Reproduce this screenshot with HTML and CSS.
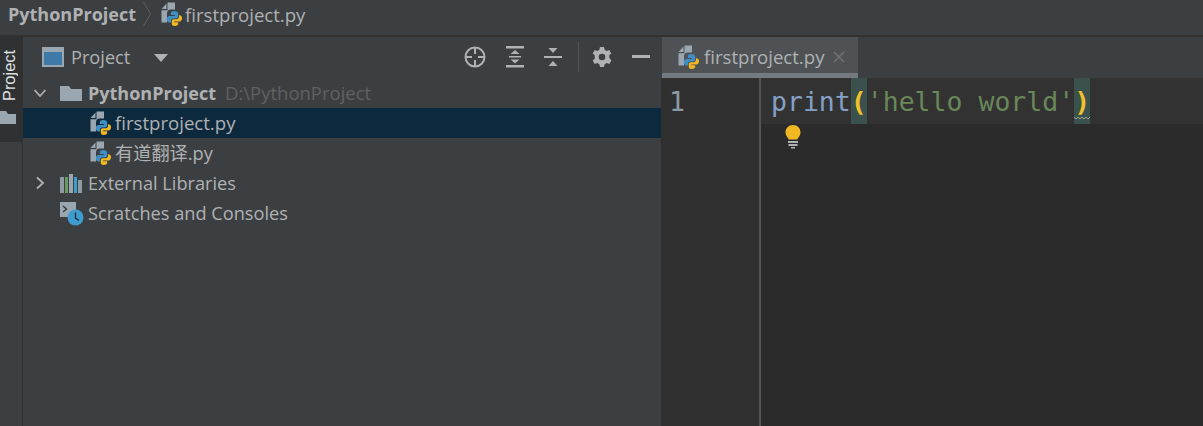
FILE: index.html
```html
<!DOCTYPE html>
<html lang="en">
<head>
<meta charset="utf-8">
<title>PythonProject</title>
<link rel="stylesheet" href="styles.css">
</head>
<body>
<svg class="defs" width="0" height="0" aria-hidden="true">
  <symbol id="py" viewBox="0 0 21 24" preserveAspectRatio="none">
    <path d="M0.500 7 L5.500 1.500 V7 Z" fill="#9aa7b0"/>
    <path d="M6.500 0.500 H14 V7.500 H9.500 C7.500 7.500 6 9 6 11.500 V20.500 H0.500 V8.200 H6.500 Z" fill="#9aa7b0"/>
    <path d="M13.500 9 C10.500 9 9.800 10 9.800 11.500 V13 H13.800 V14 H8.500 C6.800 14 5.800 15.500 5.800 17.300 C5.800 19.200 6.800 20.500 8.500 20.500 H10 V18.800 C10 17.300 11 16.500 12.300 16.500 H15.200 C16.500 16.500 17.200 15.500 17.200 14.500 V11.500 C17.200 10 15.500 9 13.500 9 Z" fill="#3f8fc4"/>
    <path d="M13.500 24 C16.500 24 17.200 23 17.200 21.800 V20.300 H13.200 V19.500 H18.500 C20 19.500 21 18 21 16.200 C21 14.400 20 13.200 18.500 13.200 H18 V14.800 C18 16.300 17 17.300 15.800 17.300 H12.800 C11.500 17.300 10.800 18.200 10.800 19.300 V21.800 C10.800 23.200 12 24 13.500 24 Z" fill="#f2b824"/>
  </symbol>
  <symbol id="folder" viewBox="0 0 22 16">
    <path d="M0 1 H9 L11 4 H22 V16 H0 Z" fill="#9aa7b0"/>
  </symbol>
</svg>

<header class="crumbs">
  <span class="crumb-root">PythonProject</span>
  <svg class="crumb-sep" width="10" height="26" viewBox="0 0 10 26"><path d="M1.500 1 L8.500 13 L1.500 25" fill="none" stroke="#5e6163" stroke-width="1"/></svg>
  <svg class="icon-py" width="21" height="24"><use href="#py"/></svg>
  <span class="crumb-file file-name">firstproject.py</span>
</header>

<main class="workspace">
  <aside class="stripe">
    <div class="stripe-tab">
      <span class="stripe-label">Project</span>
      <svg class="stripe-folder" width="18" height="13" viewBox="0 0 18 13"><path d="M-2 0 H6 L8 3 H16 V13 H-2 Z" fill="#9aa7b0"/></svg>
    </div>
  </aside>

  <section class="panel">
    <div class="panel-head">
      <div class="panel-title">
        <svg width="22" height="20" viewBox="0 0 22 20"><rect x="0" y="0" width="22" height="20" fill="#9aa7b0"/><rect x="2" y="5" width="18" height="13" fill="#3d7aa8"/></svg>
        <span class="panel-name">Project</span>
        <svg class="caret" width="14" height="8" viewBox="0 0 14 8"><path d="M0 0 H14 L7 8 Z" fill="#afb1b3"/></svg>
      </div>
      <div class="tools">
        <svg width="22" height="22" viewBox="0 0 22 22" fill="none" stroke="#afb1b3" stroke-width="2"><circle cx="11" cy="11" r="9.500"/><path d="M11 1.500 V8 M11 14 V20.500 M1.500 11 H8 M14 11 H20.500"/></svg>
        <svg width="18" height="22" viewBox="0 0 18 22" fill="#afb1b3"><rect y="0" width="18" height="2.500"/><rect y="19" width="18" height="2.500"/><rect x="3" y="10" width="12" height="1.500"/><path d="M9 4 L13.500 8 H4.500 Z M9 17.500 L13.500 13.500 H4.500 Z"/></svg>
        <svg width="18" height="20" viewBox="0 0 18 20" fill="#afb1b3"><rect y="9" width="18" height="2"/><path d="M4.500 1 H13.500 L9 6 Z M9 14 L13.500 19 H4.500 Z"/></svg>
        <span class="tool-sep"></span>
        <svg width="20" height="20" viewBox="0 0 20 20"><path fill="#afb1b3" fill-rule="evenodd" d="M8 0 H12 L12.600 2.700 L14.700 3.900 L17.300 3 L19.300 6.500 L17.300 8.300 V10.700 L19.300 13.500 L17.300 17 L14.700 16.100 L12.600 17.300 L12 20 H8 L7.400 17.300 L5.300 16.100 L2.700 17 L.700 13.500 L2.700 11.700 V8.300 L.700 6.500 L2.700 3 L5.300 3.900 L7.400 2.700 Z M10 6.700 A3.300 3.300 0 1 0 10 13.300 A3.300 3.300 0 1 0 10 6.700 Z"/></svg>
        <span class="minimize"></span>
      </div>
    </div>

    <ul class="tree">
      <li class="row">
        <svg class="chev" width="14" height="14" viewBox="0 0 14 14"><path d="M1.500 4 L7 10 L12.500 4" fill="none" stroke="#afb1b3" stroke-width="1.800"/></svg>
        <svg class="node-icon" width="22" height="16"><use href="#folder"/></svg>
        <span class="bold">PythonProject</span><span class="path">D:\PythonProject</span>
      </li>
      <li class="row row-file row-selected">
        <svg width="21" height="24"><use href="#py"/></svg>
        <span class="file-name">firstproject.py</span>
      </li>
      <li class="row row-file">
        <svg width="21" height="24"><use href="#py"/></svg>
        <span>有道翻译.py</span>
      </li>
      <li class="row">
        <svg class="chev" width="14" height="14" viewBox="0 0 14 14"><path d="M4 1.500 L10 7 L4 12.500" fill="none" stroke="#afb1b3" stroke-width="1.800"/></svg>
        <svg class="node-icon" width="22" height="19" viewBox="0 0 22 19"><rect x="0" y="3" width="4" height="16" fill="#8f9ba3"/><rect x="5" y="3" width="3" height="16" fill="#6b9a5e"/><rect x="9" y="0" width="4" height="19" fill="#9aa7b0"/><rect x="14" y="3" width="3" height="16" fill="#3f9ccf"/><rect x="18" y="6" width="4" height="13" fill="#8f9ba3"/></svg>
        <span>External Libraries</span>
      </li>
      <li class="row">
        <span class="chev-space"></span>
        <svg class="node-icon" width="24" height="25" viewBox="0 0 24 25"><rect x="0" y="1" width="16" height="15" fill="#9aa7b0"/><path d="M3 5 L6.500 8 L3 11" fill="none" stroke="#3c3f41" stroke-width="1.500"/><circle cx="15.500" cy="16.500" r="8" fill="#3f9ccf"/><path d="M15.500 11.500 V17 L19 19.500" fill="none" stroke="#26343d" stroke-width="1.500"/></svg>
        <span class="scratch">Scratches and Consoles</span>
      </li>
    </ul>
  </section>

  <section class="editor">
    <div class="tabs">
      <div class="tab">
        <svg width="21" height="24"><use href="#py"/></svg>
        <span class="tab-name file-name">firstproject.py</span>
        <svg class="tab-close" width="12" height="12" viewBox="0 0 12 12"><path d="M1 1 L11 11 M11 1 L1 11" stroke="#6f7375" stroke-width="1.500"/></svg>
      </div>
    </div>
    <div class="code-area">
      <div class="gutter"><span class="line-no">1</span></div>
      <div class="code">
        <div class="current-line"><span class="fn">print</span><span class="brace">(</span><span class="str">'hello world'</span><span class="brace">)<svg class="squiggle" width="16" height="4" viewBox="0 0 16 4"><path d="M0 1 L2 3 L4 1 L6 3 L8 1 L10 3 L12 1 L14 3 L16 1" fill="none" stroke="#a09f8c" stroke-width="1"/></svg></span></div>
        <svg class="bulb" width="18" height="24" viewBox="0 0 18 24"><path d="M9 0 C4.500 0 1.500 3.300 1.500 7.500 C1.500 10.500 3.500 12 4.800 14.500 H13.200 C14.500 12 16.500 10.500 16.500 7.500 C16.500 3.300 13.500 0 9 0 Z" fill="#f2b824"/><rect x="4" y="16" width="10" height="2" fill="#afb1b3"/><rect x="4.500" y="19" width="9" height="2" fill="#afb1b3"/><rect x="7" y="22" width="4" height="1.500" fill="#afb1b3"/></svg>
      </div>
    </div>
  </section>
</main>
</body>
</html>
```
FILE: styles.css
```css
* { box-sizing: border-box; }

html, body {
  margin: 0;
  height: 426px;
  overflow: hidden;
}

body {
  display: flex;
  flex-direction: column;
  background: #3c3f41;
  color: #afb1b3;
  font-family: "Open Sans", "Noto Sans CJK SC", sans-serif;
  font-size: 18.200px;
}

.defs { position: absolute; }

.file-name { font-size: 18.600px; }

.crumbs {
  height: 37px;
  flex: none;
  display: flex;
  align-items: center;
  padding: 0 0 7px 8px;
  border-bottom: 2px solid #323232;
  background: #3c3f41;
}

.crumb-root {
  font-weight: 700;
  font-size: 18px;
  color: #afb1b3;
}

.crumb-sep { margin: 0 9px 0 6px; }
.crumb-file { margin-left: 3px; }

.workspace {
  flex: 1;
  display: flex;
  min-height: 0;
}

.stripe {
  width: 23px;
  flex: none;
  border-right: 1px solid #323232;
}

.stripe-tab {
  height: 105px;
  background: #2f3133;
  display: flex;
  flex-direction: column;
  align-items: flex-start;
  padding: 13px 0 0 0;
  gap: 10px;
}

.stripe-label {
  writing-mode: vertical-rl;
  transform: rotate(180deg);
  color: #dfe1e3;
  font-family: "Liberation Sans", sans-serif;
  font-size: 16.400px;
  line-height: 19px;
}

.stripe-folder { flex: none; }

.panel {
  width: 638px;
  flex: none;
  display: flex;
  flex-direction: column;
}

.panel-head {
  height: 41px;
  flex: none;
  display: flex;
  align-items: center;
  justify-content: space-between;
  padding: 0 11px 2px 19px;
}

.panel-title {
  display: flex;
  align-items: center;
}

.panel-name { margin-left: 7px; }
.caret { margin-left: 24px; margin-top: 2px; }

.tools {
  display: flex;
  align-items: center;
  gap: 20px;
}

.tool-sep {
  width: 1px;
  height: 30px;
  margin: 0 -7px 0 -4px;
  background: #515557;
}

.minimize {
  width: 18px;
  height: 3px;
  background: #afb1b3;
}

.tree {
  list-style: none;
  margin: 0;
  padding: 0;
}

.row {
  height: 30px;
  display: flex;
  align-items: center;
  padding-left: 10px;
  white-space: nowrap;
  line-height: 24px;
}

.chev, .chev-space { width: 14px; flex: none; }
.node-icon { margin: 0 6px 0 13px; flex: none; }

.row-file {
  padding-left: 67px;
  gap: 4px;
}

.row-selected { background: #0d293e; }

.bold { font-weight: 700; font-size: 18px; }

.path {
  margin-left: 9px;
  font-size: 18.500px;
  color: #5e6163;
}

.scratch { margin-left: -2px; }

.editor {
  flex: 1;
  min-width: 0;
  display: flex;
  flex-direction: column;
}

.tabs {
  height: 41px;
  flex: none;
  padding-left: 1px;
  background: #3c3f41;
}

.tab {
  width: 196px;
  height: 100%;
  display: flex;
  align-items: center;
  padding: 3px 10px 0 16px;
  background: #4e5254;
  border-bottom: 5px solid #747a80;
  gap: 5px;
}

.tab-name { color: #afb1b3; }
.tab-close { margin-left: 4px; }

.code-area {
  flex: 1;
  display: flex;
  min-height: 0;
  background: #2b2b2b;
}

.gutter {
  width: 100px;
  flex: none;
  background: #303030;
  border-right: 2px solid #555555;
  padding: 2px 0 0 8px;
  font-family: "DejaVu Sans Mono", monospace;
  font-size: 26.570px;
  line-height: 44px;
  color: #8c9aa3;
}

.code {
  flex: 1;
  min-width: 0;
}

.current-line {
  height: 46px;
  padding-left: 10px;
  background: #323232;
  font-family: "DejaVu Sans Mono", monospace;
  font-size: 26.500px;
  line-height: 48px;
  white-space: pre;
}

.fn { color: #86a0c5; }
.str { color: #6a8759; }

.brace {
  display: inline-block;
  position: relative;
  height: 46px;
  vertical-align: top;
  background: #3b514d;
  font-weight: 700;
  color: #f2c027;
}

.squiggle {
  position: absolute;
  left: 0;
  bottom: 4px;
}

.bulb {
  display: block;
  margin: 1px 0 0 23px;
}
```
